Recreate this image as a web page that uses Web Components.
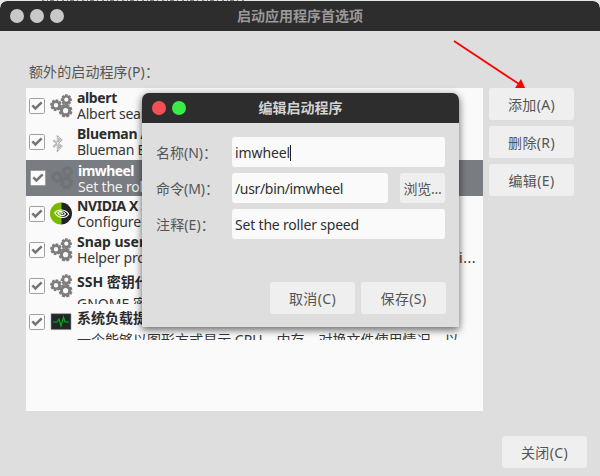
<!DOCTYPE html>
<html lang="zh-CN">
<head>
<meta charset="utf-8">
<title>启动应用程序首选项</title>
<style>
html,body{margin:0;height:476px;overflow:hidden;background:#e4e6e4}
body{font:14px/16px "Noto Sans","Noto Sans CJK SC",sans-serif;color:#555}
</style>
</head>
<body>
<startup-app></startup-app>
<script>
const define=(name,html,ready)=>customElements.define(name,class extends HTMLElement{
  connectedCallback(){
    if(this.shadowRoot)return;
    const t=document.createElement('template');t.innerHTML=html;
    this.attachShadow({mode:'open'}).append(t.content.cloneNode(true));
    if(ready)ready(this,this.shadowRoot);
  }
});

/* A single line whose tracking is adjusted so it spans the width in `w`. */
define('fit-text',`<style>:host{display:inline-block;white-space:pre}span{display:inline-block}</style><span><slot></slot></span>`,(el,r)=>{
  const w=+el.getAttribute('w');if(!w)return;
  const s=r.querySelector('span'),n=[...el.textContent].length;
  s.style.letterSpacing=((w-s.getBoundingClientRect().width)/n)+'px';
});

define('title-bar',`<style>
:host{display:grid;grid-template-columns:1fr auto 1fr;align-items:center;height:30px;background:#2d2d2d;color:#999;font-weight:700;border-radius:7px 7px 0 0;box-sizing:border-box;padding:0 10px}
.d{display:flex;gap:6px}i{width:14px;height:14px;border-radius:50%;background:#c8c8c8}
:host([dialog]){color:#d3d3d3}
:host([dialog]) i:nth-child(1){background:#f25056}:host([dialog]) i:nth-child(2){background:#39ea49}:host([dialog]) i:nth-child(3){display:none}
</style><div class="d"><i></i><i></i><i></i></div><slot></slot>`);

define('push-button',`<style>:host{display:flex;align-items:center;justify-content:center;width:85px;height:32px;box-sizing:border-box;padding-top:2px;border-radius:3px;background:#efefef;color:#555}
:host([small]){width:45px;height:30px}</style><slot></slot>`);

define('text-field',`<style>:host{display:flex;align-items:center;height:30px;box-sizing:border-box;padding:2px 0 0 3px;border-radius:3px;background:#fafafa;color:#303030}
i{width:1px;height:16px;background:#222;display:none}:host([focused]) i{display:block}</style><slot></slot><i></i>`);

const gear=(x,y,r,k)=>{
  let d='';const n=8;
  for(let i=0;i<n;i++){
    [[-.32,r*.78],[-.22,r],[.22,r],[.32,r*.78]].forEach(([a,q])=>{
      const t=i*2*Math.PI/n+a+k;d+=(d?'L':'M')+(x+q*Math.cos(t)).toFixed(2)+' '+(y+q*Math.sin(t)).toFixed(2);
    });
  }
  const h=r*.37;
  return `<path fill-rule="evenodd" d="${d}ZM${x-h} ${y}a${h} ${h} 0 1 0 ${2*h} 0a${h} ${h} 0 1 0 ${-2*h} 0Z"/>`;
};
const icons={
  gears:`<g fill="currentColor">${gear(6,11.2,6,.2)}${gear(16.3,5.7,5.7,0)}${gear(15.6,16.7,7,.39)}</g>`,
  bluetooth:`<path d="M3.3 10.2L11.3 16.2L7.8 20V7L11.3 10L3.3 17" fill="none" stroke="#999" stroke-width="1.9"/><path d="M3.3 10.2L11.3 16.2L7.8 20V7L11.3 10L3.3 17" fill="none" stroke="#eee" stroke-width=".8"/>`,
  nvidia:`<defs><clipPath id="c"><circle cx="11" cy="11.5" r="11"/></clipPath></defs><g clip-path="url(#c)"><path fill="#79b900" d="M0 0H12V24H0Z"/><path fill="#222" d="M11.5 0H24V24H11.5Z"/></g><g fill="none" stroke="#fff" stroke-width="1.1"><path d="M4.7 10.8C8 6.8 15.5 7 18.7 12.2C15.5 17 8 16.5 4.7 10.8Z"/><path d="M7.8 11C10 8.4 14 9.2 15.5 12C13.8 14.4 9.8 14.3 7.8 11Z"/><path d="M10.6 11.3C11.4 10.4 12.6 11 12.9 12.3"/></g>`,
  load:`<path fill="#222628" stroke="#999" stroke-width=".6" d="M1 3.7H21V19.6H1Z"/><path d="M3 12H7L9 9L11 16L13.5 7L15 12H19" fill="none" stroke="#00b515" stroke-width="1.1"/>`
};
define('app-icon',`<style>:host{display:block;width:23px;height:24px;color:#7d7d7d}svg{display:block}</style><svg width="23" height="24"></svg>`,(el,r)=>{r.querySelector('svg').innerHTML=icons[el.getAttribute('name')]});

define('check-box',`<style>:host{display:block;width:16px;height:16px}svg{display:block}</style>
<svg width="16" height="16"><rect x=".5" y=".5" width="15" height="15" rx="1.2" fill="#fcfcfc" stroke="#a0a0a0"/><path d="M3.3 7.4L6.4 10.4L12.7 4.4" fill="none" stroke="#757575" stroke-width="2.5"/></svg>`);

define('startup-row',`<style>
:host{display:grid;grid-template-columns:16px 23px 1fr;column-gap:5px;height:36px;box-sizing:border-box;padding:0 7px 0 3px;overflow:hidden;color:#363636}
check-box{margin-top:10px}.icon{margin-top:6px}
.t{margin-left:-1px;padding-top:2px;white-space:nowrap;min-width:0}
b,.s{display:block;height:16px}b{color:#2c2c2c}
:host([tall]) .t{padding-top:6px}:host([tall]) .s{margin-top:6px}
:host([selected]){background:#797c80;color:#f2f2f2;padding-left:4px}
:host([selected]) .t{padding-top:3px}
:host([selected]) b{color:#fff}:host([selected]) app-icon{color:#707376}
</style><check-box></check-box><div class="icon"></div><div class="t"><b><slot name="name"></slot></b><div class="s"><slot></slot></div></div>`,(el,r)=>{
  const icon=document.createElement('app-icon');icon.setAttribute('name',el.getAttribute('icon'));r.querySelector('.icon').append(icon);
});

define('form-row',`<style>:host{display:grid;grid-template-columns:76px 1fr auto;align-items:center;height:30px}::slotted(fit-text){padding-top:2px}</style><slot></slot>`);

define('edit-dialog',`<style>
:host{display:block;width:317px;height:234px;background:#dedede;border-radius:7px 7px 0 0;box-shadow:0 3px 7px rgba(0,0,0,.48),0 1px 11px rgba(0,0,0,.2)}
.f{display:grid;gap:6px;padding:14px 14px 0}.b{display:flex;justify-content:flex-end;gap:6px;padding:43px 13px 0}
push-button[small]{margin-left:12px}
</style>
<title-bar dialog><span>编辑启动程序</span></title-bar>
<div class="f">
<form-row><fit-text w="61">名称(N)：</fit-text><text-field focused><fit-text w="55">imwheel</fit-text></text-field></form-row>
<form-row><fit-text w="63">命令(M)：</fit-text><text-field><fit-text w="108">/usr/bin/imwheel</fit-text></text-field><push-button small><fit-text w="38">浏览...</fit-text></push-button></form-row>
<form-row><fit-text w="59">注释(E)：</fit-text><text-field><fit-text w="124">Set the roller speed</fit-text></text-field></form-row>
</div>
<div class="b"><push-button><fit-text w="47">取消(C)</fit-text></push-button><push-button><fit-text w="46">保存(S)</fit-text></push-button></div>`);

define('startup-app',`<style>
:host{display:block;position:relative;width:600px;height:476px;overflow:hidden;padding-top:1px;box-sizing:border-box}
.win{height:475px;background:#dedede;border-radius:7px 7px 0 0;overflow:hidden}
.l{padding:33px 0 0 29px;height:24px}
.m{display:grid;grid-template-columns:457px 85px;gap:6px;padding-left:26px}
.list{height:323px;background:#fafafa}.side{display:grid;gap:6px;align-content:start}
.foot{display:flex;justify-content:flex-end;padding:25px 13px 0}
.split{display:flex;justify-content:space-between}
edit-dialog{position:absolute;left:142px;top:93px}
.over{position:absolute;left:0;top:0}
</style>
<div class="win">
<title-bar><span>启动应用程序首选项</span></title-bar>
<div class="l"><fit-text w="130">额外的启动程序(P)：</fit-text></div>
<div class="m"><div class="list">
<startup-row icon="gears"><fit-text slot="name" w="40">albert</fit-text><fit-text w="112">Albert search tool</fit-text></startup-row>
<startup-row icon="bluetooth"><fit-text slot="name" w="108">Blueman Applet</fit-text><fit-text w="184">Blueman Bluetooth Manager</fit-text></startup-row>
<startup-row icon="gears" selected><fit-text slot="name" w="56">imwheel</fit-text><fit-text w="124">Set the roller speed</fit-text></startup-row>
<startup-row icon="nvidia"><fit-text slot="name" w="164">NVIDIA X Server Settings</fit-text><fit-text w="227">Configure NVIDIA X Server Settings</fit-text></startup-row>
<startup-row icon="gears"><fit-text slot="name" w="219">Snap user application autostart</fit-text><div class="split"><fit-text w="272">Helper program for launching applications</fit-text><fit-text w="17">i...</fit-text></div></startup-row>
<startup-row icon="gears" tall><fit-text slot="name">SSH 密钥代理</fit-text><fit-text>GNOME 密钥环：SSH 代理</fit-text></startup-row>
<startup-row icon="load" tall><fit-text slot="name">系统负载提示器</fit-text><fit-text w="393">一个能够以图形方式显示 CPU、内存、对换文件使用情况，以...</fit-text></startup-row>
</div>
<div class="side"><push-button><fit-text w="47">添加(A)</fit-text></push-button><push-button><fit-text w="47">删除(R)</fit-text></push-button><push-button><fit-text w="46">编辑(E)</fit-text></push-button></div></div>
<div class="foot"><push-button><fit-text w="47">关闭(C)</fit-text></push-button></div>
</div>
<edit-dialog></edit-dialog>
<svg class="over" width="600" height="100"><path d="M42 .5H244" stroke="#7b7f86" stroke-dasharray="2 3 1 2 4 3 1 4"/><path d="M454 41L519 84" stroke="#f00" stroke-width="1.8"/><path fill="#f00" d="M521 79L525 88H515Z"/></svg>`);
</script>
</body>
</html>
